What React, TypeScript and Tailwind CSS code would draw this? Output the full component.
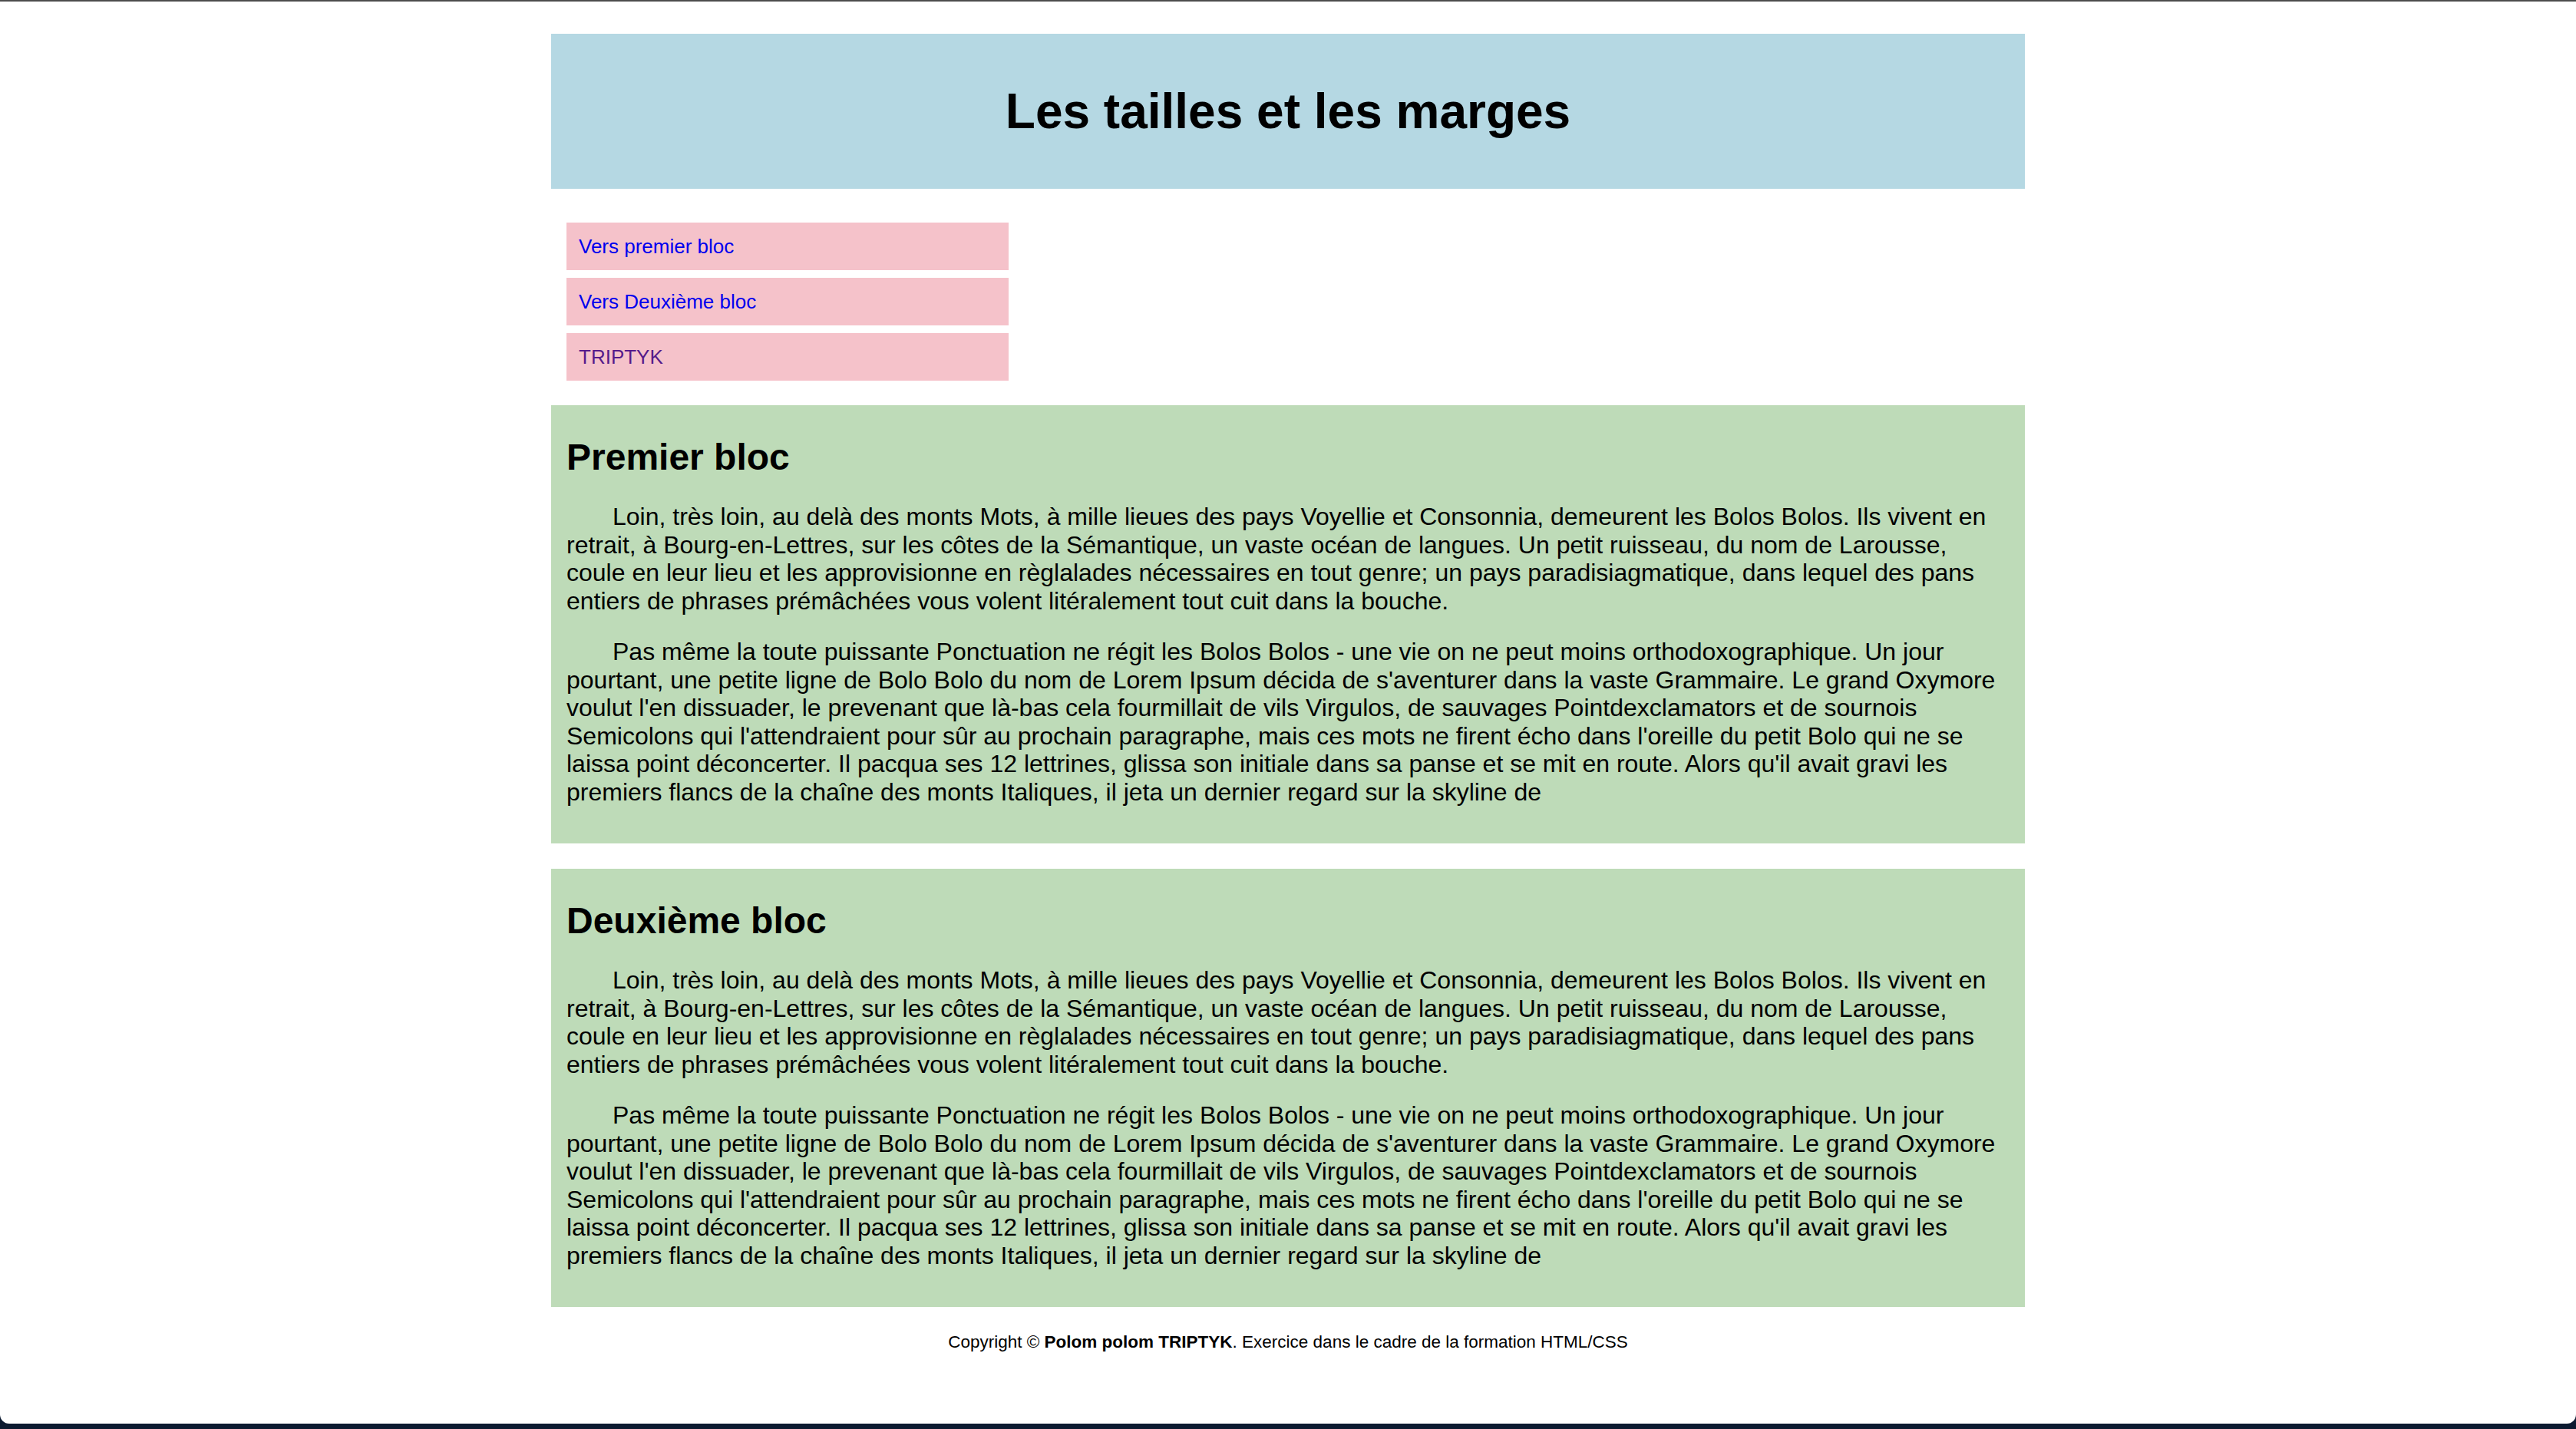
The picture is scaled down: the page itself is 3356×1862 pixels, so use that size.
import React from "react";

const para1 = [
  "Loin, très loin, au delà des monts Mots, à mille lieues des pays Voyellie et Consonnia, demeurent les Bolos Bolos. Ils vivent en",
  "retrait, à Bourg-en-Lettres, sur les côtes de la Sémantique, un vaste océan de langues. Un petit ruisseau, du nom de Larousse,",
  "coule en leur lieu et les approvisionne en règlalades nécessaires en tout genre; un pays paradisiagmatique, dans lequel des pans",
  "entiers de phrases prémâchées vous volent litéralement tout cuit dans la bouche.",
];

const para2 = [
  "Pas même la toute puissante Ponctuation ne régit les Bolos Bolos - une vie on ne peut moins orthodoxographique. Un jour",
  "pourtant, une petite ligne de Bolo Bolo du nom de Lorem Ipsum décida de s'aventurer dans la vaste Grammaire. Le grand Oxymore",
  "voulut l'en dissuader, le prevenant que là-bas cela fourmillait de vils Virgulos, de sauvages Pointdexclamators et de sournois",
  "Semicolons qui l'attendraient pour sûr au prochain paragraphe, mais ces mots ne firent écho dans l'oreille du petit Bolo qui ne se",
  "laissa point déconcerter. Il pacqua ses 12 lettrines, glissa son initiale dans sa panse et se mit en route. Alors qu'il avait gravi les",
  "premiers flancs de la chaîne des monts Italiques, il jeta un dernier regard sur la skyline de",
];

function Lines({ lines }: { lines: string[] }) {
  return (
    <>
      {lines.map((l, i) => (
        <React.Fragment key={i}>
          {l}
          {i < lines.length - 1 && <br />}
        </React.Fragment>
      ))}
    </>
  );
}

function Bloc({ id, title, className }: { id: string; title: string; className?: string }) {
  return (
    <section id={id} className={"bg-[#bedbb8] px-[20px] pt-[40px] pb-[49px] text-black " + (className ?? "")}>
      <h2 className="text-[48px] leading-[55px] font-bold">{title}</h2>
      <p className="mt-[32px] text-[32px] leading-[36.5px] indent-[60px] whitespace-nowrap">
        <Lines lines={para1} />
      </p>
      <p className="mt-[30px] text-[32px] leading-[36.5px] indent-[60px] whitespace-nowrap">
        <Lines lines={para2} />
      </p>
    </section>
  );
}

export default function App() {
  return (
    <div className="min-h-[1862px] bg-[#0c1a30] font-['Liberation_Sans',Arial,Helvetica,sans-serif]">
      <div className="h-[1855px] bg-white border-t-2 border-[#4d4d4d] rounded-b-[12px] overflow-hidden">
        <div className="w-[1920px] mx-auto pt-[42px]">
          <header className="h-[202px] bg-[#b5d8e3] flex items-center justify-center">
            <h1 className="text-[64px] leading-[74px] font-bold text-black">Les tailles et les marges</h1>
          </header>

          <nav className="mt-[44px] pl-[20px] flex flex-col gap-[10px]">
            <a href="#premier" className="block w-[576px] bg-[#f5c2ca] px-[16px] py-[16px] text-[26px] leading-[30px] text-[#0000ee]">
              Vers premier bloc
            </a>
            <a href="#deuxieme" className="block w-[576px] bg-[#f5c2ca] px-[16px] py-[16px] text-[26px] leading-[30px] text-[#0000ee]">
              Vers Deuxième bloc
            </a>
            <a href="#triptyk" className="block w-[576px] bg-[#f5c2ca] px-[16px] py-[16px] text-[26px] leading-[30px] text-[#551a8b]">
              TRIPTYK
            </a>
          </nav>

          <Bloc id="premier" title="Premier bloc" className="mt-[32px]" />
          <Bloc id="deuxieme" title="Deuxième bloc" className="mt-[33px]" />

          <footer className="mt-[33px] text-center text-[22.5px] leading-[25px] text-black">
            Copyright © <strong className="font-bold">Polom polom TRIPTYK</strong>. Exercice dans le cadre de la formation HTML/CSS
          </footer>
        </div>
      </div>
    </div>
  );
}
